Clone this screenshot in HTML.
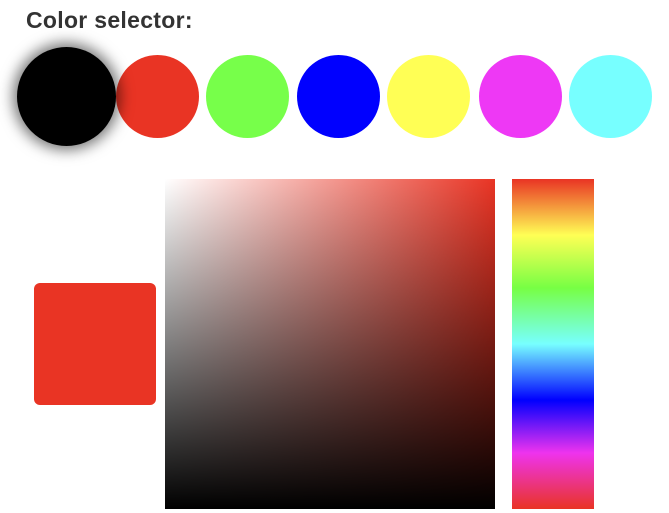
<!DOCTYPE html>
<html><head><style>
html,body{margin:0;padding:0;background:#fff;width:669px;height:513px;overflow:hidden;position:relative;font-family:"Liberation Sans",Arial,sans-serif}
.t{position:absolute;left:26px;top:7px;font-size:23px;font-weight:bold;color:#333;letter-spacing:0.3px}
.c{position:absolute;border-radius:50%;width:83px;height:83px;top:55px}
.sw{position:absolute;left:34px;top:283px;width:122px;height:122px;border-radius:6px;background:#e93424}
.sq{position:absolute;left:165px;top:179px;width:330px;height:330px;background:linear-gradient(to bottom,rgba(0,0,0,0),#000),linear-gradient(to right,#fff,#e93424)}
.hb{position:absolute;left:512px;top:179px;width:82px;height:330px;background:linear-gradient(to bottom,#e93424 0%,#ffff55 17%,#77ff44 33%,#77ffff 50%,#0000ff 67%,#ee33ee 83%,#e93424 100%)}
</style></head><body>
<div class="t">Color selector:</div>
<div class="c" style="left:116px;background:#e93424"></div>
<div class="c" style="left:206px;background:#77ff4a"></div>
<div class="c" style="left:297px;background:#0000ff"></div>
<div class="c" style="left:387px;background:#ffff55"></div>
<div class="c" style="left:479px;background:#ee38f5"></div>
<div class="c" style="left:569px;background:#77ffff"></div>
<div class="c" style="left:17px;top:47px;width:99px;height:99px;background:#000;box-shadow:0 0 14px 4px rgba(0,0,0,0.55)"></div>
<div class="sw"></div>
<div class="sq"></div>
<div class="hb"></div>
</body></html>
